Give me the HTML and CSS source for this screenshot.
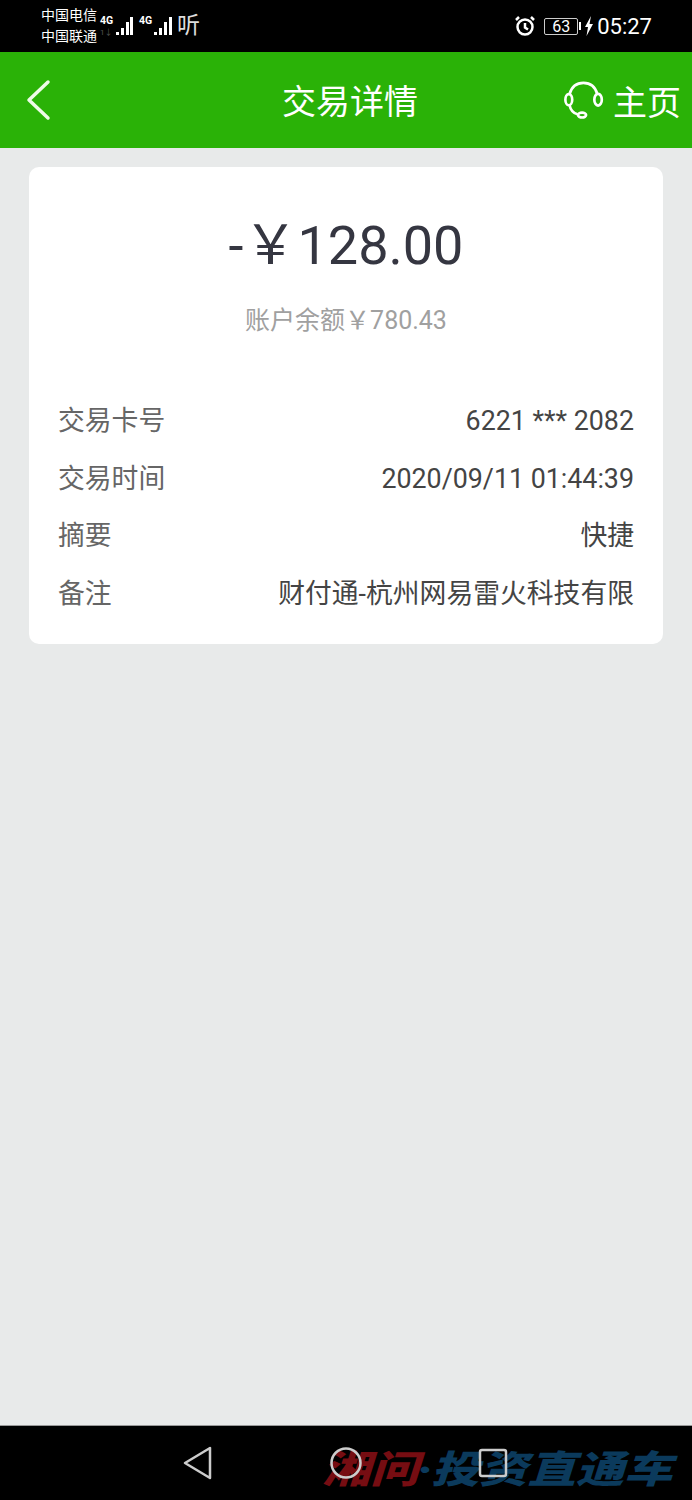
FILE: index.html
```html
<!DOCTYPE html>
<html lang="zh">
<head>
  <meta charset="UTF-8" />
  <title>交易详情</title>
  <link rel="stylesheet" href="styles.css">
</head>
<body>
  <div class="phone">
    <div class="status">
      <div class="carriers"><span>中国电信</span><span>中国联通</span></div>
      <div class="signal">
        <div class="net"><span>4G</span><span class="sim">1↓</span></div>
        <svg width="19" height="20" viewBox="0 0 19 20"><path d="M2 19h3v-3H2zM7 19h3v-7H7zM12 19h3V6h-3zM16 19h3V1h-3z" fill="#fff"/></svg>
      </div>
      <div class="signal">
        <div class="net"><span>4G</span></div>
        <svg width="19" height="20" viewBox="0 0 19 20"><path d="M1 19h3v-3H1zM6 19h3v-7H6zM11 19h3V6h-3zM16 19h3V1h-3z" fill="#fff"/></svg>
      </div>
      <div class="listen">听</div>
      <div class="status-right">
        <svg width="22" height="22" viewBox="0 0 22 22" fill="none" stroke="#fff" stroke-width="2.500"><circle cx="11" cy="12" r="7.500"/><path d="M11 8v4.500l3 2M2 5l3-3M20 5l-3-3"/></svg>
        <div class="battery"><span>63</span></div>
        <div class="battery-tip"></div>
        <svg width="10" height="20" viewBox="0 0 10 20"><path d="M7 0 1 11h3l-1.500 9L9 8H5.500z" fill="#fff"/></svg>
        <span class="clock">05:27</span>
      </div>
    </div>

    <header class="topbar">
      <svg class="back" width="26" height="42" viewBox="0 0 26 42" fill="none" stroke="#eefbe8" stroke-width="3.500" stroke-linecap="round" stroke-linejoin="round"><path d="M23 3 4 21l19 18"/></svg>
      <h1>交易详情</h1>
      <div class="home">
        <svg width="47" height="43" viewBox="0 0 44 40" fill="none" stroke="#fff" stroke-width="2.500"><path d="M8 13C10 6 14 2.500 21 2.500S32 6 34 13"/><ellipse cx="7.300" cy="18.300" rx="3.200" ry="5.200"/><ellipse cx="34.700" cy="18.300" rx="3.500" ry="5.500"/><path d="M8 23.500C9 28 11 31 15.500 32"/><ellipse cx="19.700" cy="32.700" rx="3.800" ry="2.300"/></svg>
        <span>主页</span>
      </div>
    </header>

    <main class="content">
      <section class="card">
        <div class="amount">-￥128.00</div>
        <div class="balance">账户余额￥780.43</div>
        <div class="rows">
          <div class="row"><span class="key">交易卡号</span><span class="val">6221 *** 2082</span></div>
          <div class="row"><span class="key">交易时间</span><span class="val">2020/09/11 01:44:39</span></div>
          <div class="row"><span class="key">摘要</span><span class="val">快捷</span></div>
          <div class="row"><span class="key">备注</span><span class="val">财付通-杭州网易雷火科技有限</span></div>
        </div>
      </section>
    </main>

    <nav class="navbar">
      <div class="watermark"><span class="wm-red">湘问</span><span class="wm-dot">·</span><span class="wm-blue">投资直通车</span></div>
      <svg class="nav-back" width="30" height="34" viewBox="0 0 30 34" fill="none" stroke="#ccc" stroke-width="2.500" stroke-linejoin="round"><path d="M27 2v30L2 17z"/></svg>
      <svg class="nav-home" width="32" height="32" viewBox="0 0 32 32" fill="none" stroke="#ccc" stroke-width="2.500"><circle cx="16" cy="16" r="14.500"/></svg>
      <svg class="nav-recent" width="30" height="30" viewBox="0 0 30 30" fill="none" stroke="#ccc" stroke-width="2.500"><rect x="2" y="2" width="26" height="26" rx="2"/></svg>
    </nav>
  </div>
</body>
</html>
```
FILE: styles.css
```css
* { box-sizing: border-box; }
body { margin: 0; font-family: Roboto, "Noto Sans CJK SC", sans-serif; background: #e8eaea; }
.phone { width: 692px; height: 1500px; display: flex; flex-direction: column; }

.status { height: 52px; background: #000; color: #fff; display: flex; align-items: center; padding: 0 40px 0 41px; flex: none; }
.carriers { display: flex; flex-direction: column; font-size: 14px; line-height: 21px; margin-right: 3px; }
.carriers span { display: block; white-space: nowrap; }
.signal { display: flex; align-items: flex-end; height: 20px; margin-right: 6px; margin-top: -1px; }
.signal:nth-of-type(3) { margin-right: 5px; }
.net { width: 14px; height: 20px; display: flex; flex-direction: column; font-size: 10.500px; line-height: 9px; font-weight: 700; }
.sim { color: #555; font-weight: 400; font-size: 8px; margin-top: 3px; }
.listen { font-size: 23px; line-height: 26px; color: #ddd; }
.status-right { margin-left: auto; display: flex; align-items: center; }
.battery { width: 34px; height: 17px; border: 1px solid #ccc; border-radius: 2px; font-size: 16px; line-height: 15px; text-align: center; margin-left: 8px; }
.battery-tip { width: 2px; height: 8px; background: #fff; margin-left: 1px; margin-right: 3px; }
.clock { font-size: 22px; margin-left: 3px; }

.topbar { height: 96px; background: #2ab207; color: #fff; display: flex; align-items: center; position: relative; flex: none; padding-left: 25px; }
.topbar h1 { margin: 0; font-size: 34px; font-weight: 400; position: absolute; left: 0; right: 0; top: 2px; text-align: center; line-height: 96px; padding-left: 8px; }
.home { margin-left: auto; display: flex; align-items: center; padding-right: 11px; font-size: 34px; position: relative; }
.home svg { margin-right: 5px; margin-top: 2px; }

.content { flex: 1; padding: 19px 29px 0; }
.card { background: #fff; border-radius: 10px; height: 477px; padding: 44px 29px 0; }
.amount { font-size: 54px; line-height: 70px; color: #353641; text-align: center; }
.balance { font-size: 25px; line-height: 36px; color: #a0a0a0; text-align: center; margin-top: 22px; }
.rows { margin-top: 54px; }
.row { display: flex; justify-content: space-between; height: 57.700px; line-height: 57.700px; font-size: 26.800px; }
.key { color: #666; }
.val { color: #444; }

.navbar { height: 75px; background: #000; border-top: 1px solid #999; position: relative; flex: none; overflow: hidden; }
.watermark { position: absolute; left: 322px; top: 19px; font-size: 38px; line-height: 50px; font-weight: 900; font-style: italic; white-space: nowrap; transform: scaleX(1.27); transform-origin: left center; }
.wm-red { color: #760d12; }
.wm-dot { color: #0b3a5c; margin: 0 -1px; }
.wm-blue { color: #0b3a5c; }
.nav-back { position: absolute; left: 183px; top: 20px; }
.nav-home { position: absolute; left: 330px; top: 21px; }
.nav-recent { position: absolute; left: 478px; top: 22px; }
```
